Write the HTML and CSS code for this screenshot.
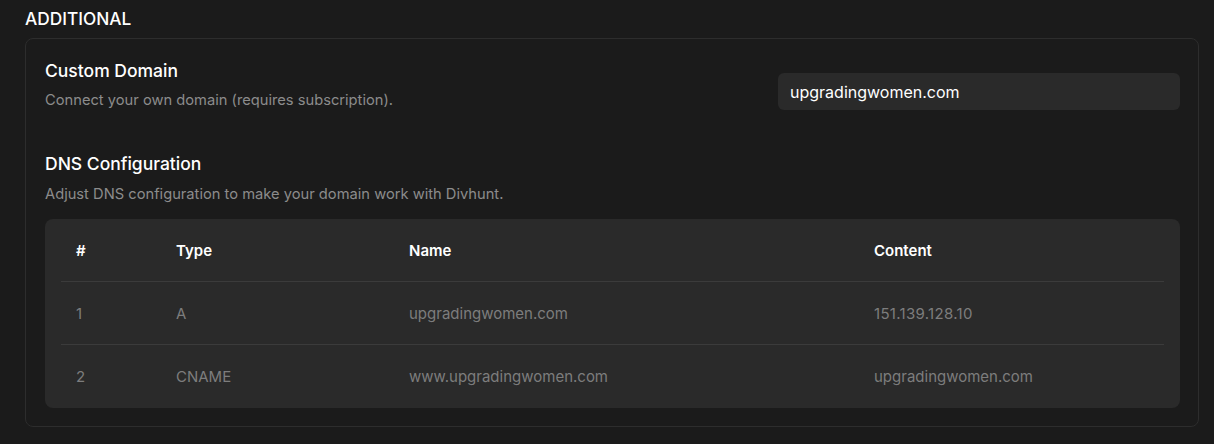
FILE: index.html
```html
<!DOCTYPE html>
<html lang="en">
<head>
<meta charset="utf-8">
<title>Additional</title>
<link rel="stylesheet" href="styles.css">
</head>
<body>
<div class="page">
  <h2 class="section-title">ADDITIONAL</h2>
  <div class="card">
    <div class="domain-row">
      <div class="text-block">
        <h3 class="item-title">Custom Domain</h3>
        <p class="item-desc">Connect your own domain (requires subscription).</p>
      </div>
      <div class="input">upgradingwomen.com</div>
    </div>
    <div class="dns-block">
      <h3 class="item-title">DNS Configuration</h3>
      <p class="item-desc">Adjust DNS configuration to make your domain work with Divhunt.</p>
      <div class="table-wrap">
        <div class="row head">
          <div class="c c1">#</div>
          <div class="c c2">Type</div>
          <div class="c c3">Name</div>
          <div class="c c4">Content</div>
        </div>
        <div class="row">
          <div class="c c1">1</div>
          <div class="c c2">A</div>
          <div class="c c3">upgradingwomen.com</div>
          <div class="c c4 num">151.139.128.10</div>
        </div>
        <div class="row last">
          <div class="c c1">2</div>
          <div class="c c2">CNAME</div>
          <div class="c c3">www.upgradingwomen.com</div>
          <div class="c c4">upgradingwomen.com</div>
        </div>
      </div>
    </div>
  </div>
</div>
</body>
</html>
```

FILE: styles.css
```css
html, body {
  margin: 0;
  padding: 0;
  background: #1b1b1b;
}
body {
  font-family: Inter, "Noto Sans", sans-serif;
  color: #ffffff;
}
.page {
  padding: 7px 15px 0 25px;
}
.section-title {
  margin: 0;
  font-size: 17.3px;
  line-height: 24px;
  font-weight: 500;
  color: #ffffff;
}
.card {
  margin-top: 7px;
  border: 1px solid #2d2d2d;
  border-radius: 8px;
  background: #1b1b1b;
  padding: 19px 18px 18px 19px;
}
.domain-row {
  display: flex;
  justify-content: space-between;
  align-items: flex-start;
}
.item-title {
  margin: 0;
  font-size: 17.5px;
  line-height: 26px;
  font-weight: 500;
  color: #ffffff;
}
.item-desc {
  margin: 6px 0 0 0;
  font-size: 14.7px;
  line-height: 20px;
  color: #8c8c8c;
}
.input {
  margin-top: 15px;
  width: 402px;
  height: 37px;
  box-sizing: border-box;
  padding: 0 12px;
  display: flex;
  align-items: center;
  background: #2a2a2a;
  border-radius: 6px;
  font-size: 16px;
  color: #ffffff;
}
.dns-block {
  margin-top: 41px;
}
.dns-block .item-desc {
  margin-top: 7px;
}
.table-wrap {
  margin-top: 15px;
  background: #2a2a2a;
  border-radius: 8px;
  padding: 0 16px;
}
.row {
  display: flex;
  height: 63px;
  box-sizing: border-box;
  align-items: center;
  border-bottom: 1px solid #3b3b3b;
  font-size: 15px;
  color: #7d7d7d;
}
.row.last {
  border-bottom: none;
}
.row.head {
  color: #ffffff;
  font-weight: 600;
}
.c {
  padding-left: 15px;
  box-sizing: border-box;
}
.c1 { width: 100px; }
.c2 { width: 233px; }
.c3 { width: 465px; }
.c4 { flex: 1; }
.num { letter-spacing: 0.3px; }
```
